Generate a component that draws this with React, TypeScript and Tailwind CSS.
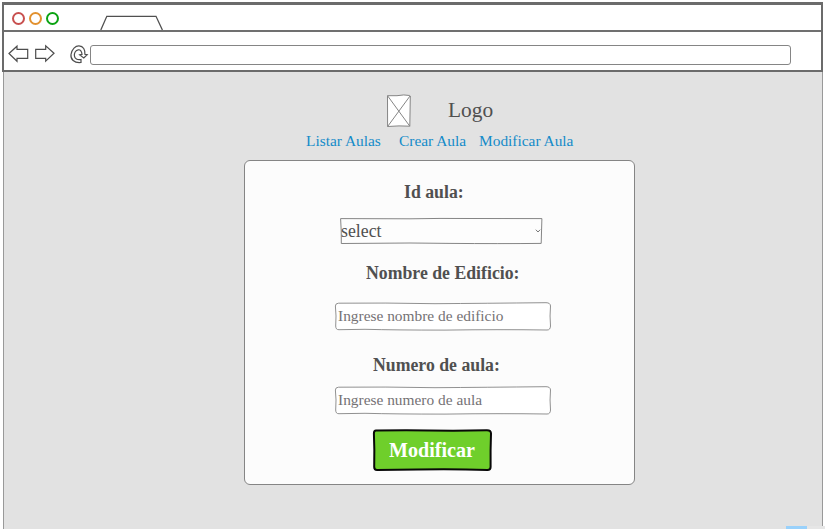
import type { ReactNode } from "react";

type FrameProps = { w: number; h: number; d: string; stroke: string; fill: string; sw?: number };

// Hand-drawn outline behind a control
function Outline({ w, h, d, stroke, fill, sw = 0.9 }: FrameProps) {
  return (
    <svg className="absolute inset-0 overflow-visible" width={w} height={h} viewBox={`0 0 ${w} ${h}`}>
      <path d={d} fill={fill} stroke={stroke} strokeWidth={sw} strokeLinejoin="round" />
    </svg>
  );
}

function Label({ children, className }: { children: ReactNode; className: string }) {
  return (
    <div className={`h-6 scale-y-[1.06] whitespace-nowrap text-[17.75px] leading-6 font-bold text-[#505050] ${className}`}>
      {children}
    </div>
  );
}

function Field({ text, className }: { text: string; className: string }) {
  return (
    <div className={`relative ml-[90px] h-7 w-[216px] ${className}`}>
      <Outline
        w={216}
        h={28}
        stroke="#858585"
        fill="#ffffff"
        d="M3.5 1.2 Q50 .7 100 1.7 Q150 1.3 211 .7 Q215.3 .7 215.5 4 Q214.6 14 215.5 24 Q215.3 28.1 212 28 Q165 27.3 110 28.1 Q60 28.1 30 27.3 L4 27.7 Q.7 27.9 .7 24 Q1.5 14 .4 4 Q.4 1.3 3.5 1.2Z"
      />
      <span className="relative block pl-[3px] text-[15.4px] leading-7 whitespace-nowrap text-[#757275]">{text}</span>
    </div>
  );
}

function Chrome() {
  return (
    <header className="mx-[2px] h-[70px] border-x-[2.5px] border-t-[3px] border-b-2 border-[#6b6b6b] bg-white">
      <div className="flex h-[27px] items-end border-b-2 border-[#707070]">
        <div className="mb-[5px] ml-[7.5px] flex gap-[4.3px]">
          <span className="size-[13px] rounded-full border-2 border-[#c8504f]" />
          <span className="size-[13px] rounded-full border-2 border-[#e2912f]" />
          <span className="size-[13px] rounded-full border-2 border-[#0ba312]" />
        </div>
        <svg className="ml-[40.5px]" width="64" height="15" viewBox="0 0 64 15" fill="none" stroke="#505050" strokeWidth="1.3">
          <path d="M.8 15 L6.8 1.3 H56 L62.4 15" />
        </svg>
      </div>
      <div className="flex h-[38px] items-start">
        <svg className="mt-[12px] ml-[4px]" width="82" height="20" viewBox="0 0 82 20" fill="none" stroke="#4d4d4d" strokeWidth="1.2">
          <path d="M1 9.5 9 2.2V5.3H19.7V14.3H9V17.3Z" />
          <path d="M46 9.3 37.7 1.8V5.3H27.7V14.3H37.7V17.1Z" />
          <path d="M73 18.5C66 19.3 62.3 15 63 10.5C63.8 5 67.5 1.7 71 1.8C75.5 2 77.2 6 76.9 10.3L79.2 10.7L75.8 14L71.7 10.9L74 10.4C73.8 7.3 72.3 5.5 70.3 5.8C67.5 6.2 66 9.2 66.4 11.8C66.8 14.8 69.2 16.2 73 15.5Z" />
        </svg>
        <div className="mt-[12.5px] h-5 w-[701px] rounded-[3px] border-[1.5px] border-[#858585] bg-white" />
      </div>
    </header>
  );
}

export default function App() {
  return (
    <div className="relative h-[529px] w-[825px] overflow-hidden bg-white pt-[2px] font-['Liberation_Serif',serif]">
      <Chrome />
      <main className="mr-[2px] ml-[3px] h-[457px] border-x border-[#999] bg-[#e2e2e2] pt-[22px]">
        <div className="ml-[383px] flex h-[35px] items-start">
          <svg width="25" height="34" viewBox="0 0 25 34" fill="none" stroke="#858585" strokeWidth="1">
            <path fill="#fff" d="M.5 1.7H10Q17 .3 22.7 1.5L23.3 2 22.8 32.2 12 31.9 .6 32.5Z" />
            <path d="M.5 1.7 22.8 32.2M23 2 .6 32.5" />
          </svg>
          <div className="ml-[36px] text-[21.4px] leading-8 text-[#505050]">Logo</div>
        </div>
        <nav className="ml-[302px] flex h-6 text-[15.4px] leading-6 whitespace-nowrap text-[#148bc9]">
          <span className="w-[93px]">Listar Aulas</span>
          <span className="w-[80px]">Crear Aula</span>
          <span>Modificar Aula</span>
        </nav>
        <section className="mt-[7px] ml-[240px] h-[325px] w-[391px] rounded-[6px] border border-[#858585] bg-[#fcfcfc] pt-[19px]">
          <Label className="ml-[159px]">Id aula:</Label>
          <div className="relative mt-[14px] ml-[95px] h-[26px] w-[203px]">
            <Outline
              w={203}
              h={26}
              stroke="#777777"
              fill="#fdfdfd"
              d="M.6 .6 L70 .8 Q100 .2 130 .5 L201.9 .6 L201.2 25.4 Q160 25.8 110 25.4 L70 25 L1.3 25.5 Q1.5 13 .6 .6Z"
            />
            <span className="relative block scale-y-[1.06] pl-px text-[17.8px] leading-[26px] text-[#505050]">select</span>
            <svg className="absolute top-[11px] right-[2.5px]" width="6" height="4" viewBox="0 0 6 4" fill="none" stroke="#777" strokeWidth="1">
              <path d="M.8 .7 3 3 5.2 .7" />
            </svg>
          </div>
          <Label className="mt-[17px] ml-[121px]">Nombre de Edificio:</Label>
          <Field className="mt-[17px]" text="Ingrese nombre de edificio" />
          <Label className="mt-[23px] ml-[128px]">Numero de aula:</Label>
          <Field className="mt-[9px]" text="Ingrese numero de aula" />
          <button className="relative mt-[15px] ml-[128px] block h-[42px] w-[119px] text-center">
            <Outline
              w={119}
              h={42}
              stroke="#080808"
              fill="#6fcf2b"
              sw={2}
              d="M3 1.4 Q40 .8 80 1.7 L114 1.2 Q118 1.2 118 4.5 Q117.4 20 117.6 38 Q117.6 41 114.5 41 Q80 39.8 45 40.5 L4 41 Q1.2 41 1.2 38 Q1.6 20 .9 4.5 Q.9 1.4 3 1.4Z"
            />
            <span className="relative block scale-y-[1.03] pr-px text-[20.1px] leading-[43px] font-bold text-white">Modificar</span>
          </button>
        </section>
      </main>
      <div className="absolute right-0 bottom-0 flex h-[3px] w-[39px]">
        <span className="w-[21px] bg-[#99d1fb]" />
        <span className="w-[18px] bg-[#e6e6e6]" />
      </div>
    </div>
  );
}
